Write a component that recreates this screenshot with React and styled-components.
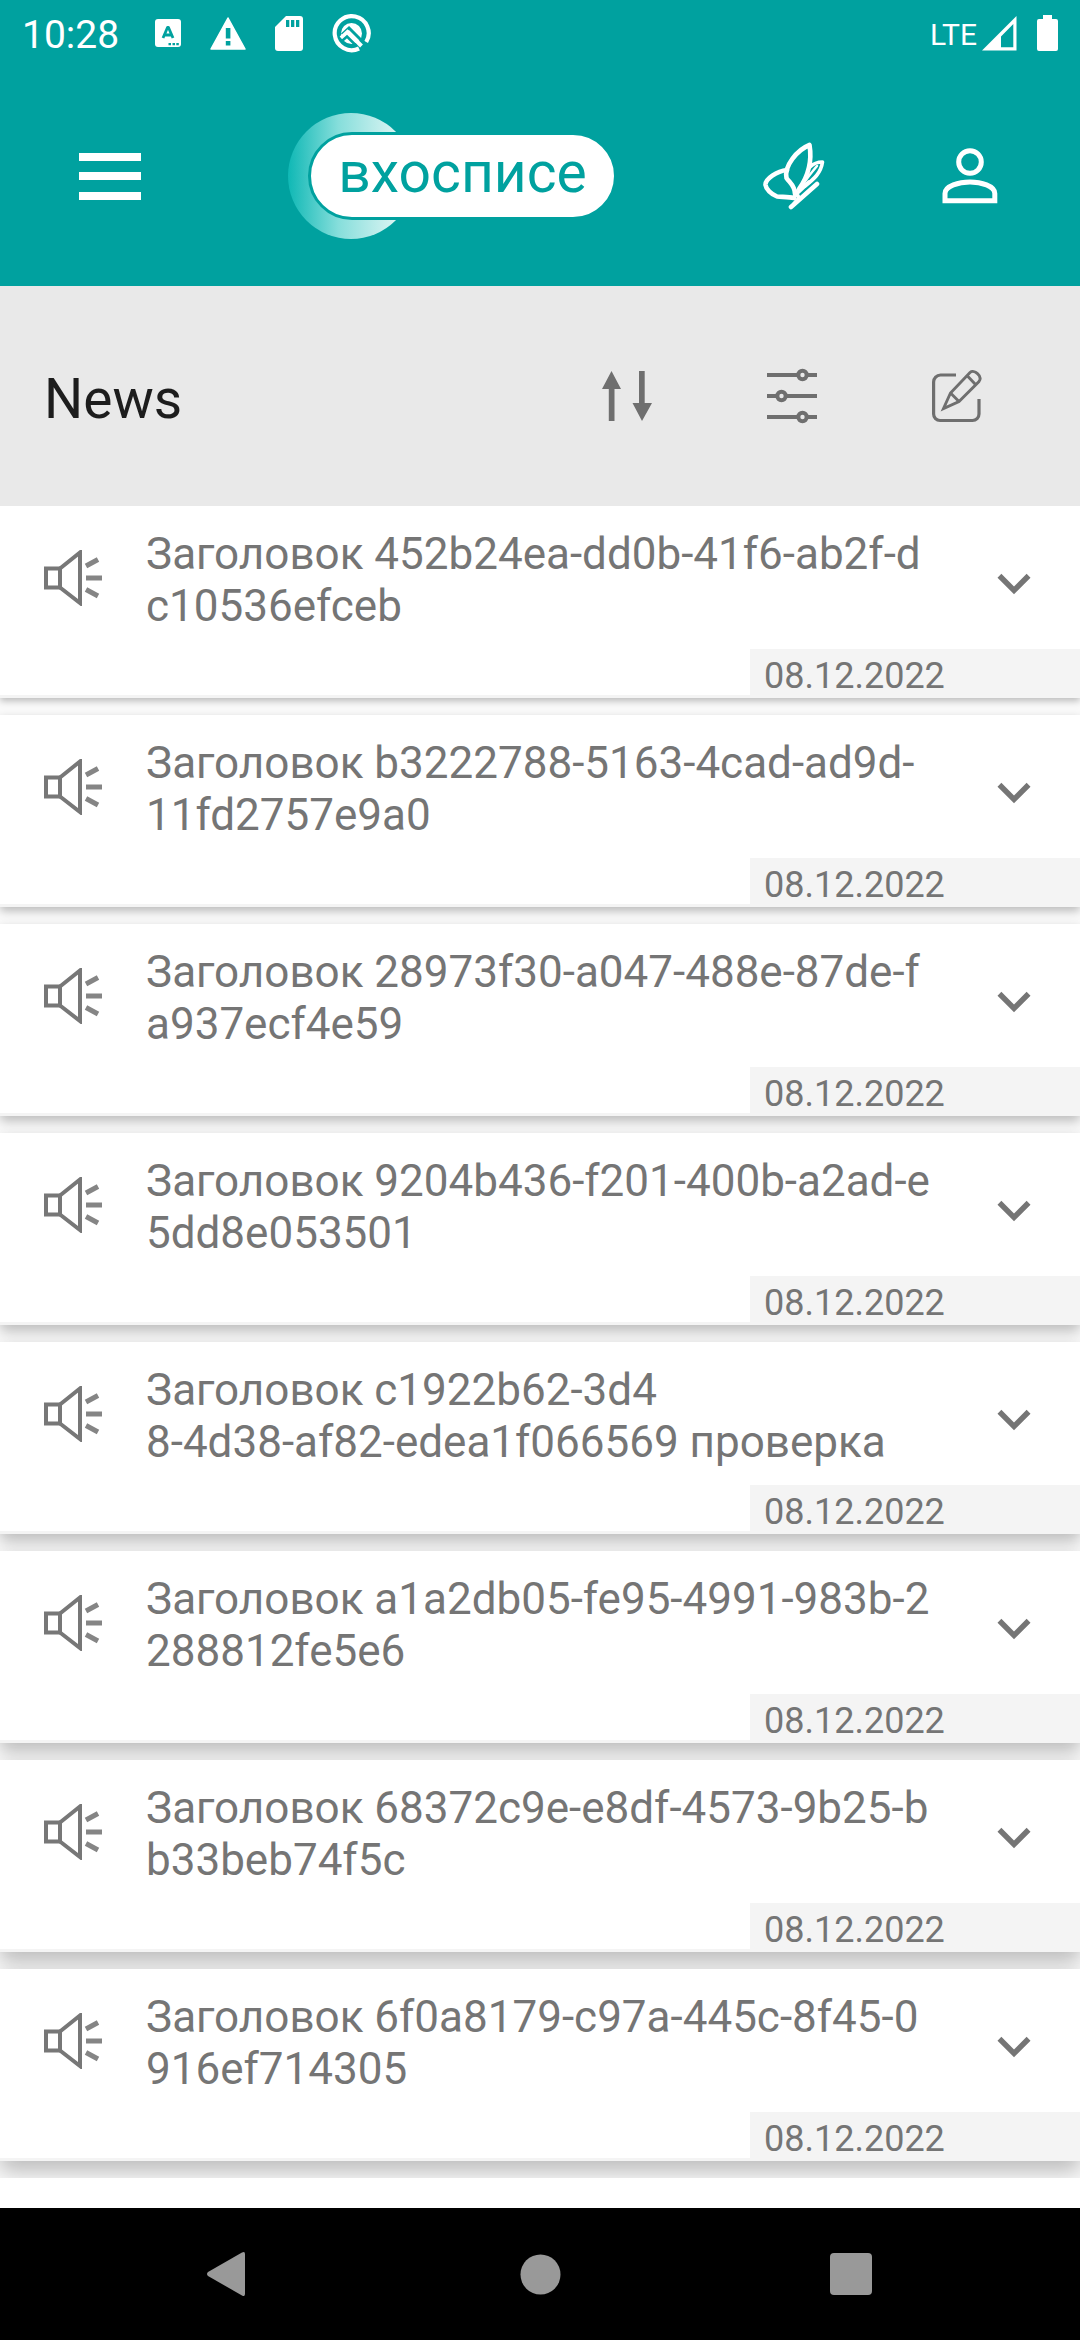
import React from "react";
import styled, { createGlobalStyle } from "styled-components";

const teal = "#00a19f";
const grey = "#6f6f6f";

const GlobalStyle = createGlobalStyle`
  *, *::before, *::after { box-sizing: border-box; }
  body { margin: 0; background: #000; font-family: Roboto, "Noto Sans", sans-serif; }
`;

const Screen = styled.div`
  display: flex;
  flex-direction: column;
  height: 100vh;
  background: #fafafa;
`;

const StatusBar = styled.div`
  flex: none;
  display: flex;
  align-items: center;
  justify-content: space-between;
  height: 66px;
  padding: 0 22px;
  background: ${teal};
  color: #fff;
`;

const StatusGroup = styled.div`
  display: flex;
  align-items: center;
  gap: ${(p) => p.$gap}px;
`;

const Clock = styled.time`
  margin-right: 7px;
  padding-top: 3px;
  font-size: 39px;
  line-height: 46px;
`;

const Network = styled.span`
  padding-top: 3px;
  font-size: 30px;
  line-height: 40px;
`;

const SignalGroup = styled.div`
  display: flex;
  align-items: center;
  gap: 5px;
`;

const Header = styled.header`
  flex: none;
  display: flex;
  align-items: center;
  gap: 44px;
  height: 220px;
  padding: 0 44px;
  background: ${teal};
`;

const IconButton = styled.button`
  flex: none;
  display: flex;
  align-items: center;
  justify-content: center;
  width: ${(p) => p.$width}px;
  height: 132px;
  padding: 0;
  border: 0;
  background: none;
  color: ${(p) => p.$color};
`;

const LogoArea = styled.div`
  flex: 1;
  display: flex;
  justify-content: center;
`;

const Logo = styled.a`
  position: relative;
  display: flex;
  align-items: center;
  width: 330px;
  height: 128px;
  padding-left: 21px;
  text-decoration: none;
`;

const Halo = styled.svg`
  position: absolute;
  left: 0;
  top: 0;
`;

const LogoPill = styled.span`
  position: relative;
  flex: 1;
  display: flex;
  justify-content: center;
  height: 88px;
  border: 3px solid ${teal};
  border-radius: 44px;
  background: #fff;
  color: ${teal};
  font-size: 57px;
  line-height: 76px;
`;

const Toolbar = styled.div`
  flex: none;
  display: flex;
  align-items: center;
  height: 220px;
  padding: 0 41px 0 44px;
  background: #e9e9e9;
`;

const PageTitle = styled.h1`
  flex: 1;
  margin: 0;
  padding-top: 5px;
  color: #1d1d1d;
  font-size: 55px;
  font-weight: 400;
  line-height: 66px;
`;

const NewsList = styled.ul`
  flex: 1;
  min-height: 0;
  display: flex;
  flex-direction: column;
  gap: 17px;
  margin: 0;
  padding: 0;
  overflow: hidden;
  list-style: none;
`;

const Card = styled.li`
  flex: none;
  border-bottom: 3px solid #f4f4f4;
  background: #fff;
  box-shadow: 0 ${(p) => 3 + p.$depth}px ${(p) => 7 + p.$depth * 2}px rgba(0, 0, 0, 0.26);
`;

const NextCard = styled.li`
  flex: 1;
  background: #fff;
`;

const CardMain = styled.div`
  display: flex;
  height: 143px;
  padding: 0 33px 0 44px;
`;

const CardIcon = styled.svg`
  flex: none;
  margin-top: 44px;
`;

const CardTitle = styled.h2`
  flex: 1;
  margin: 0;
  padding: 22px 0 0 44px;
  color: #757575;
  font-size: 44px;
  font-weight: 400;
  line-height: 52px;
  white-space: pre-line;
`;

const ExpandButton = styled.button`
  flex: none;
  width: 66px;
  height: 66px;
  margin-top: 45px;
  padding: 0;
  border: 0;
  background: none;
  color: #757575;
`;

const CardDate = styled.time`
  display: block;
  width: 330px;
  margin-left: auto;
  padding: 8px 0 0 14px;
  background: #f4f4f4;
  color: #757575;
  font-size: 36px;
  line-height: 38px;
`;

const NavBar = styled.nav`
  flex: none;
  display: flex;
  align-items: center;
  justify-content: center;
  gap: 146px;
  height: 132px;
  background: #000;
`;

const news = [
  "Заголовок 452b24ea-dd0b-41f6-ab2f-d\nc10536efceb",
  "Заголовок b3222788-5163-4cad-ad9d-\n11fd2757e9a0",
  "Заголовок 28973f30-a047-488e-87de-f\na937ecf4e59",
  "Заголовок 9204b436-f201-400b-a2ad-e\n5dd8e053501",
  "Заголовок c1922b62-3d4\n8-4d38-af82-edea1f066569 проверка",
  "Заголовок a1a2db05-fe95-4991-983b-2\n288812fe5e6",
  "Заголовок 68372c9e-e8df-4573-9b25-b\nb33beb74f5c",
  "Заголовок 6f0a8179-c97a-445c-8f45-0\n916ef714305",
];

const KeyboardIcon = () => (
  <svg width="26" height="28" viewBox="0 0 26 28">
    <rect width="26" height="28" rx="3" fill="#fff" />
    <path d="M8 19 L12.5 8.500 h1 L18 19 M9.500 16 h7" fill="none" stroke={teal} strokeWidth="2.800" strokeLinejoin="round" />
    <path d="M13.500 24h2.500v2.200h-2.500zM17.500 24h2.500v2.200h-2.500zM21.300 24h2.500v2.200h-2.500z" fill={teal} />
  </svg>
);

const WarningIcon = () => (
  <svg width="36" height="33" viewBox="0 0 36 33">
    <path d="M18 1 L35 32 H1Z" fill="#fff" stroke="#fff" strokeWidth="1.500" strokeLinejoin="round" />
    <path d="M15.800 11h4.600v10.500h-4.600zM15.800 24h4.600v4.600h-4.600z" fill={teal} />
  </svg>
);

const SdCardIcon = () => (
  <svg width="28" height="35" viewBox="0 0 28 35">
    <path d="M11 0H25a3 3 0 0 1 3 3V32a3 3 0 0 1-3 3H3a3 3 0 0 1-3-3V11Z" fill="#fff" />
    <path d="M11 4h3.300v7H11zM16 4h3.300v7H16zM21 4h3.300v7H21z" fill={teal} />
  </svg>
);

const QIcon = () => (
  <svg width="39" height="39" viewBox="0 0 39 39">
    <path d="M27 34.500 A17 17 0 1 1 34.200 28" fill="none" stroke="#fff" strokeWidth="4.200" />
    <circle cx="19.500" cy="19.500" r="10.500" fill="#fff" />
    <path d="M9 23 L16 16.500 L33 33.500" fill="none" stroke={teal} strokeWidth="3" transform="translate(1 -2.500)" />
    <path d="M9 24 L15.500 18 L29.500 32" fill="none" stroke="#fff" strokeWidth="4" />
    <path d="M10 27 L15 22.500 L24 31.500" fill="none" stroke={teal} strokeWidth="2.500" />
  </svg>
);

const SignalIcon = () => (
  <svg width="35" height="35" viewBox="0 0 35 35">
    <path fillRule="evenodd" d="M34.500 0V34.500H0ZM31.300 8L19 20.500V31.300H31.300Z" fill="#fff" />
  </svg>
);

const BatteryIcon = () => (
  <svg width="21" height="36" viewBox="0 0 21 36">
    <path d="M6 0h9v4h4a2 2 0 0 1 2 2v28a2 2 0 0 1-2 2H2a2 2 0 0 1-2-2V6a2 2 0 0 1 2-2h4z" fill="#fff" />
  </svg>
);

const MenuIcon = () => (
  <svg width="62" height="48" viewBox="0 0 62 48" fill="currentColor">
    <path d="M0 1h62v8H0zM0 20h62v8H0zM0 40h62v8H0z" />
  </svg>
);

const ButterflyIcon = () => (
  <svg width="62" height="68" viewBox="0 0 62 68" fill="none" stroke="currentColor" strokeWidth="4.600" strokeLinejoin="round" strokeLinecap="round">
    <path d="M24 28 C14 29 2 37 2.500 43 C3 47 8 52 14 54.500 C20 55 26 55 31 56" />
    <path d="M32 52 C32 44 27 41 23.500 36 C21 24 34 8 46.500 3 C49 18 46 33 36 47" />
    <path d="M47 25 C50 22 55 20 59.500 20 C58 31 51 37 42 44" strokeWidth="3.600" />
    <path d="M38 44 C43 38 48 31 54 24" strokeWidth="2.500" />
    <path d="M54 42 L28 65" />
    <path d="M32 53 L46 40 M32 49 L36 56 L31 62" strokeWidth="4" />
  </svg>
);

const PersonIcon = () => (
  <svg width="56" height="56" viewBox="0 0 56 56" fill="none" stroke="currentColor" strokeWidth="5">
    <circle cx="28" cy="14" r="11.300" />
    <path d="M3 52.800 V45.500 C3 38 17 34 28 34 C39 34 52.800 38 52.800 45.500 V52.800Z" />
  </svg>
);

const SortIcon = () => (
  <svg width="50" height="50" viewBox="0 0 50 50" fill="currentColor">
    <path d="M9.500 0L19 18H12.500V50H6.800V18H0ZM37 0h5.700V32H50L40 50L30.500 32H37Z" />
  </svg>
);

const FilterIcon = () => (
  <svg width="50" height="56" viewBox="0 0 50 56" fill="none" stroke="currentColor" strokeWidth="4">
    <path d="M0 7H30M41 7H50M0 28H9M20 28H50M0 49H30M41 49H50" />
    <circle cx="35.500" cy="7" r="4.200" />
    <circle cx="14.500" cy="28" r="4.200" />
    <circle cx="35.500" cy="49" r="4.200" />
  </svg>
);

const EditIcon = () => (
  <svg width="50" height="54" viewBox="0 0 50 54" fill="none" stroke="currentColor" strokeWidth="3.200">
    <path d="M24 6H8.500A7 7 0 0 0 1.600 13V45A6.500 6.500 0 0 0 8 51.500H40.500A6.500 6.500 0 0 0 47 45V30" />
    <path d="M11.500 39.500 L18.500 24 L38 3.500 C42 0 51 7 47 12.500 L27 32.500Z" strokeWidth="2.900" />
    <path d="M18.500 24 L27 32.500 M35 6.500 L43.500 15.500" strokeWidth="2.900" />
  </svg>
);

const Speaker = () => (
  <CardIcon width="58" height="56" viewBox="0 0 58 56" fill="none" stroke="#777" strokeWidth="4">
    <path d="M2 18.500H16V37.500H2Z" />
    <path d="M16 18.500L36 2.500V53L16 37.500" />
    <path d="M42 16L54 9.500M42 28H58M42 39.500L54 46" stroke="#858585" strokeWidth="5" />
  </CardIcon>
);

const NewsCard = ({ title, depth }) => (
  <Card $depth={depth}>
    <CardMain>
      <Speaker />
      <CardTitle>{title}</CardTitle>
      <ExpandButton aria-label="Expand">
        <svg width="66" height="66" viewBox="0 0 24 24" fill="currentColor">
          <path d="M16.590 8.290L12 12.870 7.410 8.290 6 9.700l6 6 6-6z" />
        </svg>
      </ExpandButton>
    </CardMain>
    <CardDate dateTime="2022-12-08">08.12.2022</CardDate>
  </Card>
);

export default function App() {
  return (
    <Screen>
      <GlobalStyle />
      <StatusBar>
        <StatusGroup $gap={29}>
          <Clock>10:28</Clock>
          <KeyboardIcon />
          <WarningIcon />
          <SdCardIcon />
          <QIcon />
        </StatusGroup>
        <StatusGroup $gap={20}>
          <SignalGroup>
            <Network>LTE</Network>
            <SignalIcon />
          </SignalGroup>
          <BatteryIcon />
        </StatusGroup>
      </StatusBar>

      <Header>
        <IconButton $width={132} $color="#fff" aria-label="Menu">
          <MenuIcon />
        </IconButton>
        <LogoArea>
          <Logo href="#">
            <Halo width="128" height="128" viewBox="0 0 128 128">
              <defs>
                <linearGradient id="halo" x1="0" x2="1" y1="0" y2="0">
                  <stop offset="0" stopColor="#0fb8b5" />
                  <stop offset="0.400" stopColor="#86dedb" />
                  <stop offset="0.900" stopColor="#e2f6f5" />
                </linearGradient>
              </defs>
              <circle cx="64" cy="64" r="63" fill="url(#halo)" />
            </Halo>
            <LogoPill>вхосписе</LogoPill>
          </Logo>
        </LogoArea>
        <IconButton $width={132} $color="#fff" aria-label="Quotes">
          <ButterflyIcon />
        </IconButton>
        <IconButton $width={132} $color="#fff" aria-label="Profile">
          <PersonIcon />
        </IconButton>
      </Header>

      <Toolbar>
        <PageTitle>News</PageTitle>
        <IconButton $width={165} $color={grey} aria-label="Sort">
          <SortIcon />
        </IconButton>
        <IconButton $width={165} $color={grey} aria-label="Filter">
          <FilterIcon />
        </IconButton>
        <IconButton $width={165} $color={grey} aria-label="Edit">
          <EditIcon />
        </IconButton>
      </Toolbar>

      <NewsList>
        {news.map((title, i) => (
          <NewsCard key={title} title={title} depth={i} />
        ))}
        <NextCard />
      </NewsList>

      <NavBar>
        <IconButton $width={165} $color="#999" aria-label="Back">
          <svg width="46" height="46" viewBox="0 0 46 46" fill="currentColor">
            <path d="M36 1.500 Q39 0 39 3 V43 Q39 46 36 44.500 L2 25 Q0 23 2 21Z" />
          </svg>
        </IconButton>
        <IconButton $width={165} $color="#999" aria-label="Home">
          <svg width="41" height="41" viewBox="0 0 41 41" fill="currentColor">
            <circle cx="20.500" cy="20.500" r="20" />
          </svg>
        </IconButton>
        <IconButton $width={165} $color="#999" aria-label="Recent apps">
          <svg width="42" height="42" viewBox="0 0 42 42" fill="currentColor">
            <rect width="42" height="42" rx="4" />
          </svg>
        </IconButton>
      </NavBar>
    </Screen>
  );
}
